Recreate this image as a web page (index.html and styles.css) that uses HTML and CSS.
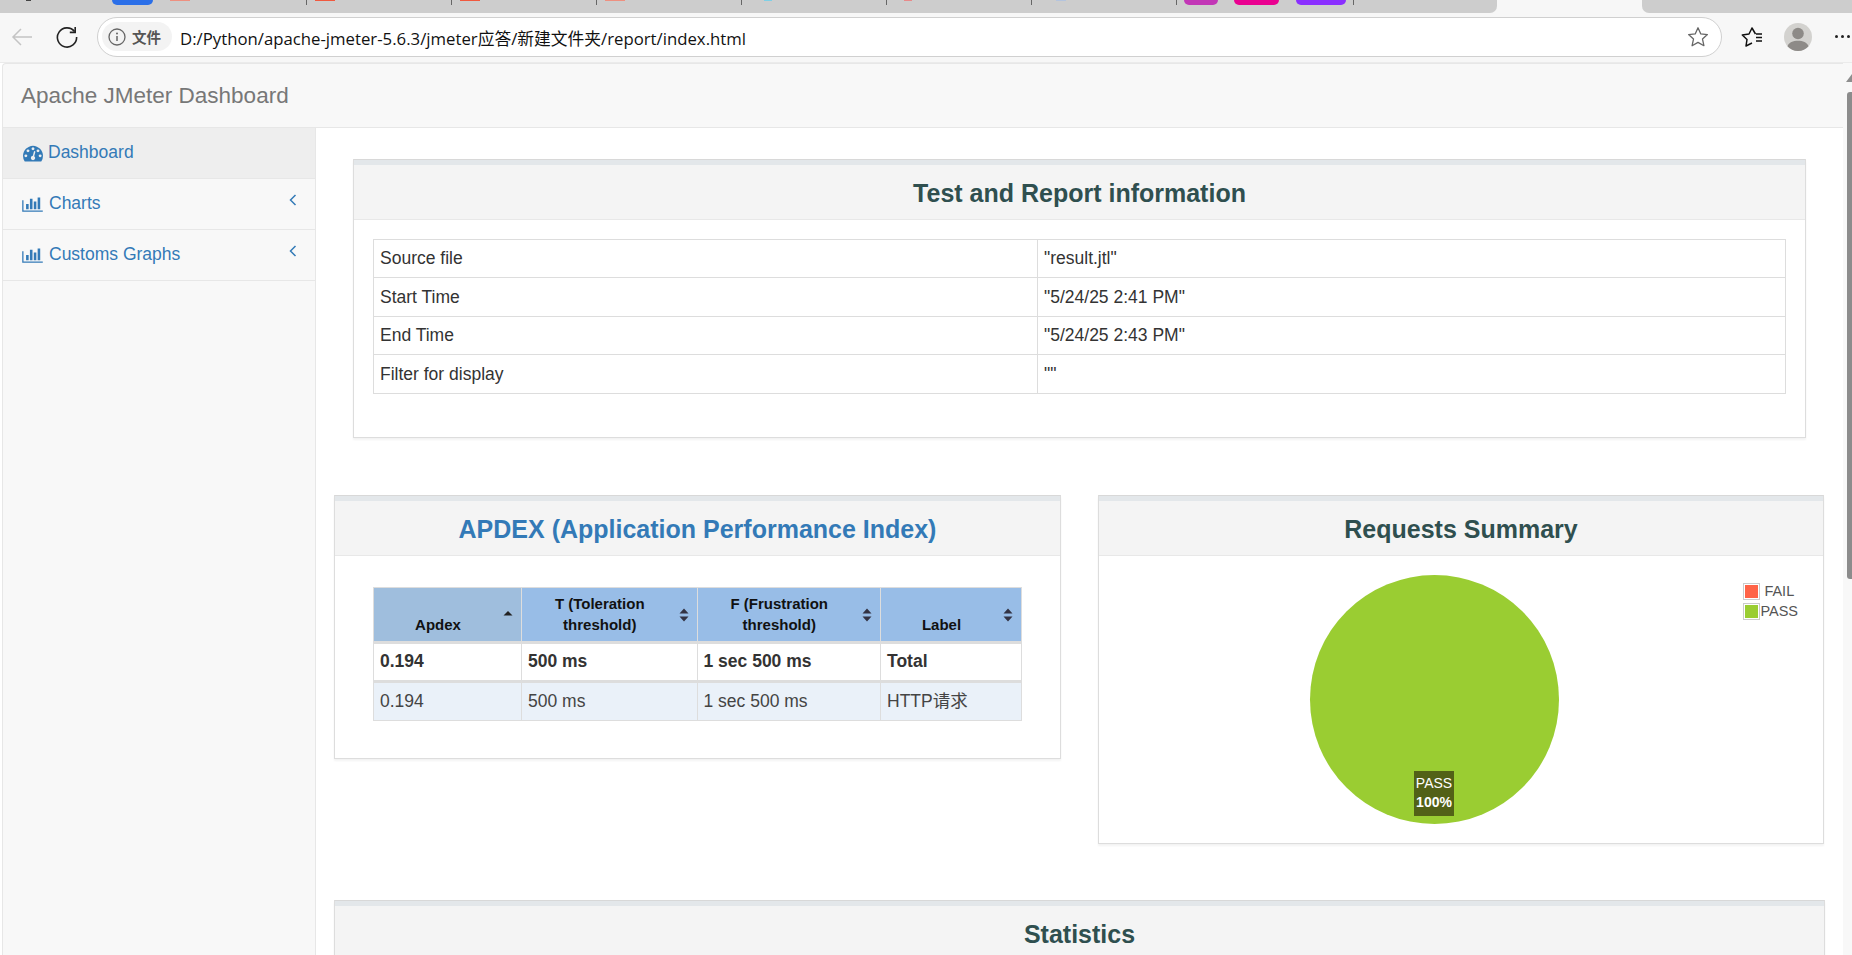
FILE: index.html
```html
<!DOCTYPE html>
<html lang="en">
<head>
<meta charset="utf-8">
<title>Apache JMeter Dashboard</title>
<link rel="stylesheet" href="styles.css">
</head>
<body>
<div class="tabstrip">
  <div class="tabs-left">
    <div class="tab-lead"><span class="lead-mark"></span><span class="pill pill-blue"></span></div>
    <div class="tab"><span class="fav fav-salmon"></span></div>
    <div class="tab"><span class="fav fav-red"></span></div>
    <div class="tab"><span class="fav fav-red"></span></div>
    <div class="tab"><span class="fav fav-salmon"></span></div>
    <div class="tab"><span class="fav fav-teal"></span></div>
    <div class="tab"><span class="fav fav-pink"></span></div>
    <div class="tab"><span class="fav fav-slate"></span></div>
    <div class="pinned">
      <span class="pill pill-magenta"></span>
      <span class="pill pill-rose"></span>
      <span class="pill pill-violet"></span>
    </div>
  </div>
  <div class="tab-active"></div>
  <div class="tabs-right"></div>
</div>
<div class="toolbar">
  <svg class="tb-back" viewBox="0 0 22 20" width="22" height="20"><path d="M21 10H2M10 2l-8 8 8 8" fill="none" stroke="#c4c4c4" stroke-width="1.5"/></svg>
  <svg class="tb-reload" viewBox="0 0 22 22" width="22" height="22"><path d="M18.6 5.6A9.6 9.6 0 1 0 20.6 11" fill="none" stroke="#222" stroke-width="1.6"/><path d="M19.2 1v5.4h-5.4" fill="none" stroke="#222" stroke-width="1.6"/></svg>
  <div class="addr">
    <div class="badge">
      <svg viewBox="0 0 18 18" width="18" height="18"><circle cx="9" cy="9" r="8" fill="none" stroke="#666" stroke-width="1.3"/><path d="M9 8v5" stroke="#666" stroke-width="1.5"/><circle cx="9" cy="5.4" r="1" fill="#666"/></svg>
      <span class="badge-text">文件</span>
    </div>
    <span class="url">D:/Python/apache-jmeter-5.6.3/jmeter应答/新建文件夹/report/index.html</span>
    <svg class="addr-star" viewBox="0 0 22 22" width="22" height="22"><path d="M11 1.8l2.8 6.1 6.6.7-4.9 4.5 1.4 6.6L11 16.4l-5.9 3.3 1.4-6.6-4.9-4.5 6.6-.7z" fill="none" stroke="#666" stroke-width="1.3" stroke-linejoin="round"/></svg>
  </div>
  <svg class="tb-favs" viewBox="0 0 22 22" width="22" height="22"><path d="M14.5 8L11 2 8 8l-6.700 1 4.700 4.500L5 20l6-3" fill="none" stroke="#111" stroke-width="1.5" stroke-linejoin="round"/><path d="M15 8h6M15 11.500h6M15 15h6" fill="none" stroke="#111" stroke-width="1.400"/></svg>
  <svg class="tb-avatar" viewBox="0 0 28 28" width="28" height="28"><circle cx="14" cy="14" r="14" fill="#d3d2cf"/><circle cx="14" cy="10.500" r="5.800" fill="#8d8a87"/><path d="M3.500 23.300C5 19 9 17.700 14 17.700s9 1.300 10.500 5.600A14 14 0 0 1 14 28 14 14 0 0 1 3.500 23.300z" fill="#8d8a87"/></svg>
  <div class="tb-more"><i></i><i></i><i></i></div>
</div>
<div class="page">
  <header class="navbar"><span class="brand">Apache JMeter Dashboard</span></header>
  <div class="frame">
    <nav class="sidebar">
      <a class="side-item side-active">
        <svg class="ico-gauge" viewBox="0 0 1792 1792" width="20" height="20"><path fill="#337ab7" d="M384 1152q0-53-37.500-90.500t-90.500-37.500-90.500 37.500-37.500 90.500 37.500 90.500 90.500 37.500 90.500-37.500 37.500-90.500zm192-448q0-53-37.500-90.500t-90.500-37.500-90.500 37.500-37.500 90.500 37.500 90.500 90.500 37.500 90.500-37.500 37.500-90.500zm428 481l101-382q6-26-7.500-48.500t-38.500-29.500-48 6.500-30 39.500l-101 382q-60 5-107 43.500t-63 98.500q-20 77 20 146t117 89 146-20 89-117q16-60-6-117t-72-91zm660-33q0-53-37.500-90.500t-90.500-37.500-90.500 37.500-37.500 90.500 37.500 90.500 90.500 37.500 90.500-37.500 37.500-90.500zm-640-640q0-53-37.500-90.500t-90.500-37.500-90.500 37.500-37.500 90.500 37.500 90.500 90.500 37.500 90.500-37.500 37.500-90.500zm448 192q0-53-37.500-90.500t-90.500-37.500-90.500 37.500-37.500 90.500 37.500 90.500 90.500 37.500 90.500-37.500 37.500-90.500zm320 448q0 261-141 483-19 29-54 29h-1402q-35 0-54-29-141-221-141-483 0-182 71-348t191-286 286-191 348-71 348 71 286 191 191 286 71 348z"/></svg>
        <span>Dashboard</span>
      </a>
      <a class="side-item">
        <svg class="ico-bars" viewBox="0 0 2048 1792" width="21" height="18"><path fill="#337ab7" d="M640 896v512h-256v-512h256zm384-512v1024h-256v-1024h256zm1024 1152v128h-2048v-1152h128v1024h1920zm-640-896v768h-256v-768h256zm384-384v1152h-256v-1152h256z"/></svg>
        <span>Charts</span>
        <svg class="chev" viewBox="0 0 8 12" width="8" height="12"><path d="M6.500 1L1.500 6l5 5" fill="none" stroke="#337ab7" stroke-width="1.500"/></svg>
      </a>
      <a class="side-item">
        <svg class="ico-bars" viewBox="0 0 2048 1792" width="21" height="18"><path fill="#337ab7" d="M640 896v512h-256v-512h256zm384-512v1024h-256v-1024h256zm1024 1152v128h-2048v-1152h128v1024h1920zm-640-896v768h-256v-768h256zm384-384v1152h-256v-1152h256z"/></svg>
        <span>Customs Graphs</span>
        <svg class="chev" viewBox="0 0 8 12" width="8" height="12"><path d="M6.500 1L1.500 6l5 5" fill="none" stroke="#337ab7" stroke-width="1.500"/></svg>
      </a>
    </nav>
    <main class="content">
      <section class="panel panel-info">
        <h2 class="panel-title">Test and Report information</h2>
        <div class="info-body">
          <table class="info-table">
            <tr><td class="info-key">Source file</td><td>"result.jtl"</td></tr>
            <tr><td class="info-key">Start Time</td><td>"5/24/25 2:41 PM"</td></tr>
            <tr><td class="info-key">End Time</td><td>"5/24/25 2:43 PM"</td></tr>
            <tr><td class="info-key">Filter for display</td><td>""</td></tr>
          </table>
        </div>
      </section>
      <div class="two-col">
        <section class="panel">
          <h2 class="panel-title"><a class="title-link">APDEX (Application Performance Index)</a></h2>
          <div class="apdex-body">
            <table class="apdex-table">
              <thead>
                <tr>
                  <th class="col-a th-sorted">Apdex<svg class="sort" viewBox="0 0 10 14" width="10" height="14"><path d="M5 3l4.500 4.500h-9z" fill="#222"/></svg></th>
                  <th class="col-t">T (Toleration threshold)<svg class="sort" viewBox="0 0 10 14" width="10" height="14"><path d="M5 .5L9.500 5.500h-9zM5 13.500L.5 8.500h9z" fill="#334"/></svg></th>
                  <th class="col-f">F (Frustration threshold)<svg class="sort" viewBox="0 0 10 14" width="10" height="14"><path d="M5 .5L9.500 5.500h-9zM5 13.500L.5 8.500h9z" fill="#334"/></svg></th>
                  <th class="col-l">Label<svg class="sort" viewBox="0 0 10 14" width="10" height="14"><path d="M5 .5L9.500 5.500h-9zM5 13.500L.5 8.500h9z" fill="#334"/></svg></th>
                </tr>
              </thead>
              <tbody>
                <tr class="row-total"><td>0.194</td><td>500 ms</td><td>1 sec 500 ms</td><td>Total</td></tr>
                <tr class="row-item"><td>0.194</td><td>500 ms</td><td>1 sec 500 ms</td><td>HTTP请求</td></tr>
              </tbody>
            </table>
          </div>
        </section>
        <section class="panel">
          <h2 class="panel-title">Requests Summary</h2>
          <div class="chart-body">
            <div class="pie"><div class="pie-label">PASS<br><b>100%</b></div></div>
            <div class="legend">
              <div class="legend-row"><span class="swatch"><i class="sw-fail"></i></span><span class="legend-fail">FAIL</span></div>
              <div class="legend-row"><span class="swatch"><i class="sw-pass"></i></span><span>PASS</span></div>
            </div>
          </div>
        </section>
      </div>
      <section class="panel">
        <h2 class="panel-title">Statistics</h2>
      </section>
    </main>
    <div class="scrollbar">
      <span class="sb-arrow"></span>
      <span class="sb-thumb"></span>
    </div>
  </div>
</div>
</body>
</html>
```

FILE: styles.css
```css
* { box-sizing: border-box; }
html, body { margin: 0; height: 955px; overflow: hidden; background: #fff; }
body { font-family: "Liberation Sans", "Noto Sans CJK SC", sans-serif; font-size: 17.5px; color: #333; display: flex; flex-direction: column; }

/* browser tab strip */
.tabstrip { height: 13px; display: flex; background: #f7f7f7; flex: none; }
.tabs-left { width: 1497px; display: flex; background: #cdcdcd; border-bottom-right-radius: 7px; align-items: flex-start; }
.tabs-right { flex: 1; background: #cdcdcd; border-bottom-left-radius: 7px; }
.tab-active { width: 145px; }
.tab-lead { width: 162px; padding-left: 26px; height: 5px; display: flex; align-items: flex-start; }
.lead-mark { width: 5px; height: 1px; background: #444; margin-right: 81px; }
.tab { width: 145px; height: 5px; border-right: 1px solid #666; padding-left: 8px; }
.fav { display: block; width: 20px; height: 1px; }
.fav-salmon { background: #ee9080; }
.fav-red { background: #f0593f; }
.fav-teal { background: #7fd0e6; width: 8px; margin-left: 14px; }
.fav-pink { background: #e88a8a; width: 8px; margin-left: 9px; }
.fav-slate { background: #b4c4de; width: 10px; margin-left: 16px; }
.pill { display: block; height: 5px; border-radius: 0 0 5px 5px; }
.pill-blue { width: 41px; background: #2b6fe8; }
.pinned { width: 177px; height: 5px; display: flex; padding-left: 7px; border-right: 1px solid #666; }
.pill-magenta { width: 34px; background: #c236b6; margin-right: 16px; }
.pill-rose { width: 45px; background: #ea0090; margin-right: 17px; }
.pill-violet { width: 50px; background: #8a2fff; }

/* browser toolbar */
.toolbar { height: 50px; background: #f7f7f7; display: flex; align-items: center; flex: none; padding: 0 0 0 11px; border-bottom: 1px solid #ebebeb; }
.tb-back { flex: none; margin-top: -2px; }
.tb-reload { flex: none; margin: -1px 0 0 23px; }
.addr { flex: none; width: 1625px; height: 40px; margin: -2px 0 0 19px; border: 1.5px solid #d0d0d0; border-radius: 20px; background: #fff; display: flex; align-items: center; padding: 0 12px 0 4px; }
.badge { width: 70px; height: 29px; border-radius: 15px; background: #f3f3f3; display: flex; align-items: center; padding-left: 6px; gap: 6px; flex: none; }
.badge-text { font-family: "Noto Sans CJK SC", sans-serif; font-size: 14.5px; font-weight: 700; color: #555; }
.url { margin: 2px 0 0 8px; font-family: "Open Sans", "Noto Sans CJK SC", sans-serif; font-size: 16.75px; color: #111; flex: 1; white-space: nowrap; }
.addr-star { flex: none; }
.tb-favs { flex: none; margin: -2px 0 0 19px; }
.tb-avatar { flex: none; margin: -2px 0 0 21px; }
.tb-more { flex: none; margin: -2px 0 0 23px; display: flex; gap: 3px; }
.tb-more i { width: 3px; height: 3px; border-radius: 50%; background: #222; }

/* page */
.page { flex: 1; min-height: 0; padding-left: 2px; display: flex; flex-direction: column; }
.navbar { height: 65px; flex: none; background: #f8f8f8; border: 1px solid #e7e7e7; border-right: 0; border-radius: 4px 0 0 0; display: flex; align-items: center; padding-left: 18px; }
.brand { font-size: 22.500px; color: #777; }
.frame { flex: 1; min-height: 0; display: flex; }

.sidebar { width: 314px; flex: none; background: #f8f8f8; border-left: 1px solid #e7e7e7; border-right: 1px solid #e7e7e7; }
.side-item { height: 51px; display: flex; align-items: center; border-bottom: 1px solid #e7e7e7; color: #337ab7; padding: 0 0 2px 20px; gap: 5px; }
.side-active { background: #eee; }
.ico-gauge { margin-top: 1px; }
.ico-bars { margin: 1px 1px 0 -1px; }
.chev { margin: -7px 18px 0 auto; }

.content { flex: 1; min-width: 0; padding: 31px 18px 0; overflow: hidden; background: #fff; }
.panel { background: #fff; border: 1px solid #ddd; border-top: 1px solid #d8d8d8; box-shadow: 0 2px 2px rgba(0,0,0,.05); }
.panel-info { margin: 0 19px 57px; }
.panel-title { margin: 0; height: 60px; background: #f4f4f4; border-top: 5px solid #e3e7ea; border-bottom: 1px solid #e8e8e8; color: #2f4f4f; font-size: 25px; font-weight: 700; text-align: center; line-height: 57px; }
.title-link { color: #337ab7; }

.info-body { padding: 19px 19px 43px; }
.info-table { width: 100%; border-collapse: collapse; table-layout: fixed; }
.info-table td { border: 1px solid #ddd; padding: 0 6px; }
.info-table tr:nth-child(odd) td { height: 38px; }
.info-table tr:nth-child(even) td { height: 39px; }
.info-key { width: 664px; }

.two-col { display: grid; grid-template-columns: 727px 726px; column-gap: 37px; align-items: start; margin-bottom: 56px; }

.apdex-body { padding: 31px 38px 37px; }
.apdex-table { width: 648px; border-collapse: collapse; table-layout: fixed; }
.apdex-table th { position: relative; background: #98bde7; color: #111; font-size: 15px; line-height: 21px; font-weight: 700; text-align: center; vertical-align: bottom; padding: 5px 27px 6px 8px; border: 1px solid #ddd; border-bottom: 3px solid #ddd; height: 55px; }
.apdex-table th.th-sorted { background: #9fbedd; }
.col-a { width: 148px; }
.col-t { width: 175.5px; }
.col-f { width: 183.5px; }
.col-l { width: 141px; }
.sort { position: absolute; right: 8px; top: 20px; }
.apdex-table td { border: 1px solid #ddd; padding: 0 6px 2px; line-height: 20px; }
.row-total td { font-weight: 700; height: 39px; border-bottom: 3px solid #ddd; }
.row-item td { height: 39px; background: #eaf1f9; color: #444; }

.chart-body { position: relative; height: 287px; padding: 19px 0 0 211px; }
.pie { position: relative; width: 249px; height: 249px; border-radius: 50%; background: #9acd32; }
.pie-label { position: absolute; left: 104px; bottom: 8px; width: 40px; height: 45px; background: #526117; color: #fff; font-size: 14px; line-height: 19px; text-align: center; padding-top: 3px; }
.legend { position: absolute; top: 25px; right: 25px; font-size: 14.5px; color: #555; }
.legend-row { display: flex; align-items: center; height: 20px; }
.swatch { width: 17px; height: 17px; border: 1px solid #ccc; padding: 1px; display: block; }
.swatch i { display: block; width: 13px; height: 13px; }
.sw-fail { background: #ff6347; }
.sw-pass { background: #9acd32; }
.legend-fail { margin-left: 4px; }

.scrollbar { width: 9px; flex: none; background: #f8f8f8; display: flex; flex-direction: column; align-items: flex-end; margin-top: -65px; position: relative; }
.sb-arrow { width: 0; height: 0; border-left: 6px solid transparent; border-bottom: 8px solid #8e8e8e; margin-top: 11px; }
.sb-thumb { width: 5px; height: 487px; background: #8c8c8c; border-radius: 3px 0 0 3px; margin-top: 10px; }
```
